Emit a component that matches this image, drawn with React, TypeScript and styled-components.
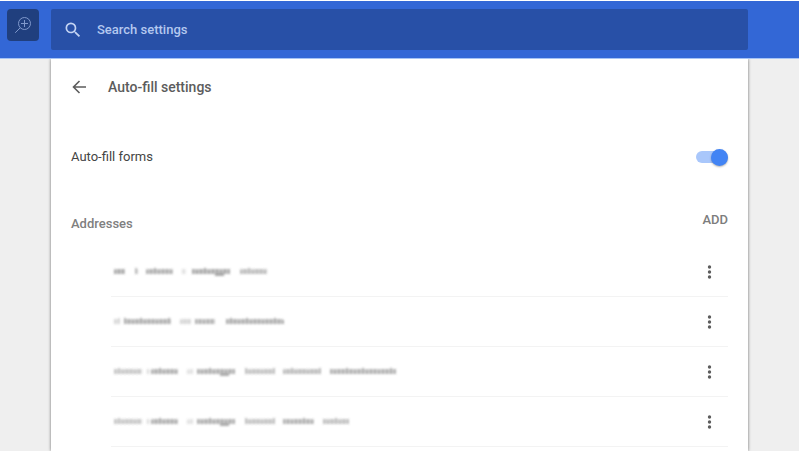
import React from 'react';
import styled, { createGlobalStyle } from 'styled-components';

const Global = createGlobalStyle`
  * { box-sizing: border-box; }
  html { background: #fff; overflow: hidden; }
  body { margin: 0; font-family: Roboto, "Liberation Sans", sans-serif; font-size: 13px; line-height: 20px; color: #444; }
  button, input { font: inherit; }
`;

const Page = styled.div`
  margin: 1px 1px 3px 0;
  background: #efefef;
  overflow: hidden;
`;

const Header = styled.header`
  position: relative;
  padding: 8px 0;
  background: #3367d6;
  border-bottom: 1px solid #a6c3f5;
`;

const Column = styled.div`
  max-width: 697px;
  margin: 0 auto;
`;

const ZoomButton = styled.button`
  position: absolute;
  top: 8px;
  left: 7px;
  display: grid;
  place-items: center;
  width: 32px;
  height: 32px;
  padding: 0;
  border: 0;
  border-radius: 4px;
  background: #203f7e;
  color: #8099cc;
`;

const SearchBox = styled.label`
  display: flex;
  align-items: center;
  gap: 14px;
  height: 41px;
  padding: 0 12px;
  border-radius: 2px;
  background: #2850a7;
  color: #c3d3f3;
`;

const SearchInput = styled.input`
  flex: 1;
  min-width: 0;
  padding: 0;
  border: 0;
  outline: 0;
  background: transparent;
  color: #fff;
  font-weight: 500;
  &::placeholder { color: #b4c8ef; opacity: 1; }
`;

const Card = styled.main`
  max-width: 697px;
  margin: 0 auto;
  padding: 0 20px 4px;
  background: #fff;
  box-shadow: 0 0 3px rgba(0, 0, 0, 0.55);
`;

const TitleBar = styled.div`
  display: flex;
  align-items: center;
  gap: 20px;
  height: 55px;
`;

const Title = styled.h1`
  margin: 0;
  font-size: 14px;
  font-weight: 500;
  color: #5c5c5c;
`;

const IconButton = styled.button`
  display: grid;
  place-items: center;
  padding: 0;
  border: 0;
  background: none;
  color: #5c5c5c;
`;

const ToggleRow = styled.label`
  display: flex;
  align-items: center;
  justify-content: space-between;
  height: 86px;
`;

const Toggle = styled.input`
  appearance: none;
  display: flex;
  align-items: center;
  justify-content: flex-end;
  width: 32px;
  height: 12px;
  margin: 0;
  border-radius: 6px;
  background: #a9c7fb;
  &::before {
    content: '';
    width: 17px;
    height: 17px;
    border-radius: 50%;
    background: #4284f4;
    box-shadow: 0 1px 2px rgba(0, 0, 0, 0.3);
  }
  &:not(:checked) { justify-content: flex-start; background: #bbb; }
  &:not(:checked)::before { background: #fafafa; }
`;

const SectionHead = styled.div`
  display: flex;
  justify-content: space-between;
  height: 47px;
  padding-top: 10px;
`;

const SectionTitle = styled.h2`
  margin: 4px 0 0;
  font-size: 13px;
  line-height: 20px;
  font-weight: 500;
  color: #808080;
`;

const AddButton = styled.button`
  align-self: flex-start;
  padding: 0;
  border: 0;
  background: none;
  font-weight: 500;
  color: #7d7d7d;
`;

const List = styled.ul`
  margin: 0 0 0 40px;
  padding: 0;
  list-style: none;
`;

const Item = styled.li`
  display: flex;
  align-items: center;
  justify-content: space-between;
  height: 50px;
  padding-right: 10px;
  border-bottom: 1px solid #f3f3f3;
`;

const Smudge = styled.svg`
  display: block;
  overflow: visible;
`;

type Word = { x: number; w: number; tone: number; tail?: number };

const common: Word[] = [
  { x: 3, w: 28, tone: 0.34 },
  { x: 36, w: 2, tone: 0.22 },
  { x: 40, w: 27, tone: 0.48 },
  { x: 76, w: 5, tone: 0.18 },
  { x: 86, w: 37, tone: 0.48, tail: 109 },
  { x: 134, w: 29, tone: 0.36 },
];

const addresses: { id: string; words: Word[] }[] = [
  {
    id: 'first',
    words: [
      { x: 3, w: 11, tone: 0.5 },
      { x: 24, w: 3, tone: 0.4 },
      { x: 35, w: 27, tone: 0.48 },
      { x: 71, w: 4, tone: 0.18 },
      { x: 81, w: 37, tone: 0.5, tail: 104 },
      { x: 129, w: 27, tone: 0.4 },
    ],
  },
  {
    id: 'second',
    words: [
      { x: 3, w: 6, tone: 0.24 },
      { x: 13, w: 47, tone: 0.48 },
      { x: 69, w: 11, tone: 0.26 },
      { x: 84, w: 20, tone: 0.46 },
      { x: 115, w: 57, tone: 0.48 },
    ],
  },
  { id: 'third', words: [...common, { x: 172, w: 38, tone: 0.4 }, { x: 219, w: 65, tone: 0.46 }] },
  { id: 'fourth', words: [...common, { x: 172, w: 31, tone: 0.46 }, { x: 212, w: 26, tone: 0.38 }] },
];

const heights = [4, 5, 5, 6, 5, 4, 5, 6, 4, 5, 5];

function ObscuredAddress({ id, words }: { id: string; words: Word[] }) {
  return (
    <Smudge width="290" height="16" viewBox="0 0 290 16" role="img" aria-label="Obscured address">
      <defs>
        <filter id={id} x="-5%" y="-50%" width="110%" height="200%">
          <feGaussianBlur stdDeviation="0.9 1" />
        </filter>
      </defs>
      <g filter={`url(#${id})`} fill="#555">
        {words.map((word) => (
          <g key={word.x} opacity={word.tone}>
            <rect x={word.x} y="5" width={word.w} height="5" opacity="0.65" />
            {Array.from({ length: Math.ceil(word.w / 4) }, (_, i) => {
              const h = heights[(i + word.w) % heights.length];
              return <rect key={i} x={word.x + i * 4} y={10 - h} width="2" height={h} />;
            })}
            {word.tail && <rect x={word.tail} y="9" width="9" height="3" />}
          </g>
        ))}
      </g>
    </Smudge>
  );
}

export default function App() {
  return (
    <>
      <Global />
      <Page>
        <Header>
          <ZoomButton aria-label="Enlarge">
            <svg width="18" height="18" viewBox="0 0 18 18" fill="none" stroke="currentColor" strokeWidth="1">
              <circle cx="10.5" cy="7.5" r="6" />
              <path d="M6.2 11.8 1.2 16.8M7 7.5h7M10.5 4v7" />
            </svg>
          </ZoomButton>
          <Column>
            <SearchBox>
              <svg width="20" height="20" viewBox="0 0 24 24" fill="currentColor" aria-hidden="true">
                <path d="M15.5 14h-.79l-.28-.27A6.47 6.47 0 0 0 16 9.5 6.5 6.5 0 1 0 9.5 16c1.61 0 3.09-.59 4.23-1.57l.27.28v.79l5 4.99L20.49 19zm-6 0C7.01 14 5 11.99 5 9.5S7.01 5 9.5 5 14 7.01 14 9.5 11.99 14 9.5 14z" />
              </svg>
              <SearchInput type="text" aria-label="Search settings" placeholder="Search settings" />
            </SearchBox>
          </Column>
        </Header>
        <Card>
          <TitleBar>
            <IconButton aria-label="Back">
              <svg width="17" height="20" viewBox="0 0 17 20" fill="none" stroke="currentColor" strokeWidth="1.6">
                <path d="M15 10H2.5M8.5 4 2.5 10l6 6" />
              </svg>
            </IconButton>
            <Title>Auto-fill settings</Title>
          </TitleBar>
          <ToggleRow>
            Auto-fill forms
            <Toggle type="checkbox" role="switch" defaultChecked />
          </ToggleRow>
          <SectionHead>
            <SectionTitle>Addresses</SectionTitle>
            <AddButton>ADD</AddButton>
          </SectionHead>
          <List>
            {addresses.map((address) => (
              <Item key={address.id}>
                <ObscuredAddress {...address} />
                <IconButton aria-label="More actions">
                  <svg width="17" height="20" viewBox="0 0 17 20" fill="currentColor">
                    <circle cx="8.5" cy="5" r="1.7" />
                    <circle cx="8.5" cy="10" r="1.7" />
                    <circle cx="8.5" cy="15" r="1.7" />
                  </svg>
                </IconButton>
              </Item>
            ))}
          </List>
        </Card>
      </Page>
    </>
  );
}
